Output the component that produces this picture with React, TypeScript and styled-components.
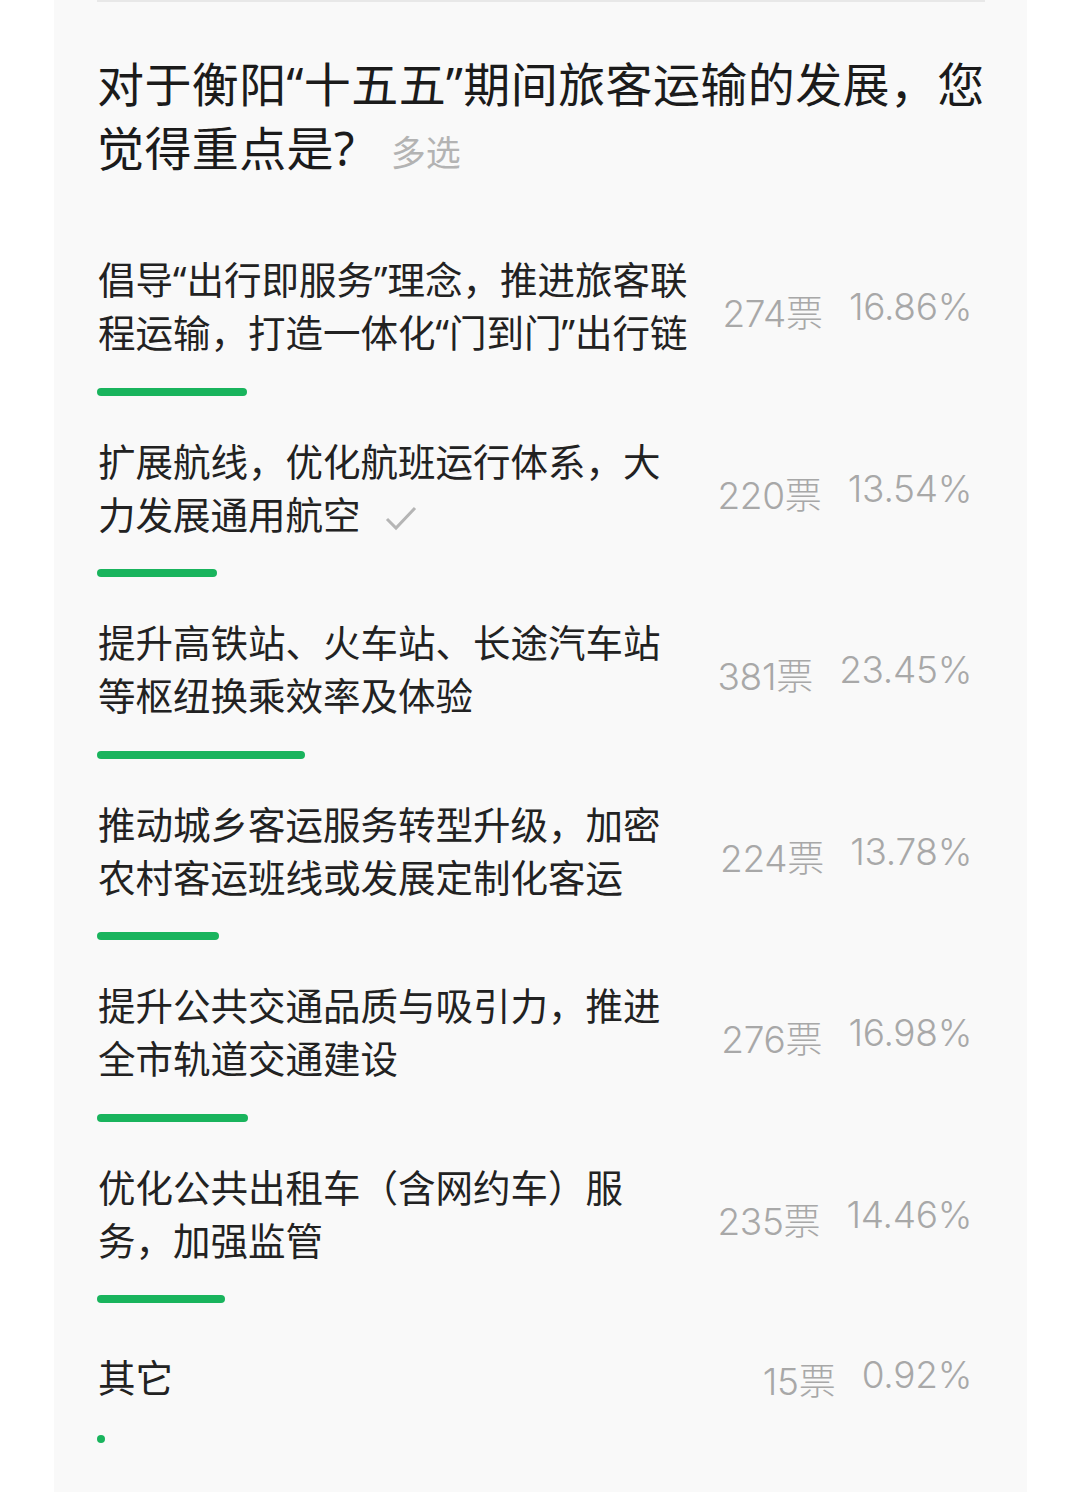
import styled, { createGlobalStyle } from 'styled-components';

const GlobalStyle = createGlobalStyle`
  html, body {
    margin: 0;
    padding: 0;
    background: #ffffff;
  }
  body {
    font-family: "Noto Sans", "Noto Sans CJK SC", sans-serif;
    -webkit-font-smoothing: antialiased;
  }
`;

const Card = styled.div`
  margin: 0 53px 0 54px;
  min-height: 1492px;
  padding: 0 42px 0 43px;
  background: #f9f9f9;
  box-sizing: border-box;
`;

const TopRule = styled.div`
  height: 2px;
  background: #e8e8e8;
`;

const Title = styled.h1`
  margin: 50px 0 29px;
  font-size: 47px;
  line-height: 64px;
  font-weight: 400;
  color: #1b1b1b;
  letter-spacing: 0.4px;
  white-space: nowrap;
`;

const TitleTag = styled.span`
  margin-left: 36px;
  font-size: 35px;
  font-weight: 400;
  letter-spacing: 0;
  color: #b3b3b3;
`;

const Option = styled.div`
  padding-top: 39px;
`;

const OptionHead = styled.div`
  display: flex;
  align-items: center;
  justify-content: space-between;
`;

const OptionText = styled.div<{ $single?: boolean }>`
  font-size: 37.5px;
  line-height: 53px;
  color: #222222;
  padding-left: 1px;
  padding-top: ${p => (p.$single ? '6px' : '0')};
  white-space: nowrap;
`;

const Stats = styled.div`
  display: flex;
  gap: 26px;
  margin-top: 10px;
  padding-right: 13px;
  font-family: Inter, "Noto Sans CJK SC", sans-serif;
  font-weight: 300;
  font-size: 37px;
  color: #a8a8a8;
  white-space: nowrap;
  letter-spacing: -0.3px;
`;

const Votes = styled.span`
  & > em {
    font-style: normal;
    font-family: "Noto Sans CJK SC", sans-serif;
    font-weight: 300;
    font-size: 37px;
    letter-spacing: 0;
  }
`;

const Check = styled.svg`
  margin-left: 24px;
  vertical-align: -2px;
`;

const Bar = styled.div`
  margin-top: 28.5px;
  height: 8px;
  border-radius: 4px;
  background: #19b45d;
`;

type TOption = {
  lines: string[];
  votes: number;
  pct: string;
  checked?: boolean;
};

const options: TOption[] = [
  { lines: ['倡导“出行即服务”理念，推进旅客联', '程运输，打造一体化“门到门”出行链'], votes: 274, pct: '16.86' },
  { lines: ['扩展航线，优化航班运行体系，大', '力发展通用航空'], votes: 220, pct: '13.54', checked: true },
  { lines: ['提升高铁站、火车站、长途汽车站', '等枢纽换乘效率及体验'], votes: 381, pct: '23.45' },
  { lines: ['推动城乡客运服务转型升级，加密', '农村客运班线或发展定制化客运'], votes: 224, pct: '13.78' },
  { lines: ['提升公共交通品质与吸引力，推进', '全市轨道交通建设'], votes: 276, pct: '16.98' },
  { lines: ['优化公共出租车（含网约车）服', '务，加强监管'], votes: 235, pct: '14.46' },
  { lines: ['其它'], votes: 15, pct: '0.92' },
];

export default function App() {
  return (
    <>
      <GlobalStyle />
      <Card lang="zh-CN">
        <TopRule />
        <Title>
          对于衡阳“十五五”期间旅客运输的发展，您
          <br />
          觉得重点是?<TitleTag>多选</TitleTag>
        </Title>
        {options.map((o, i) => (
          <Option key={i}>
            <OptionHead>
              <OptionText $single={o.lines.length === 1}>
                {o.lines.map((l, j) => (
                  <div key={j}>
                    {l}
                    {o.checked && j === o.lines.length - 1 && (
                      <Check width="32" height="26" viewBox="0 0 32 26">
                        <path d="M2 14 L11 23 L30 3" fill="none" stroke="#b5b5b5" strokeWidth="3" />
                      </Check>
                    )}
                  </div>
                ))}
              </OptionText>
              <Stats>
                <Votes>
                  {o.votes}
                  <em>票</em>
                </Votes>
                <span>{o.pct}%</span>
              </Stats>
            </OptionHead>
            <Bar style={{ width: `${o.pct}%` }} />
          </Option>
        ))}
      </Card>
    </>
  );
}
